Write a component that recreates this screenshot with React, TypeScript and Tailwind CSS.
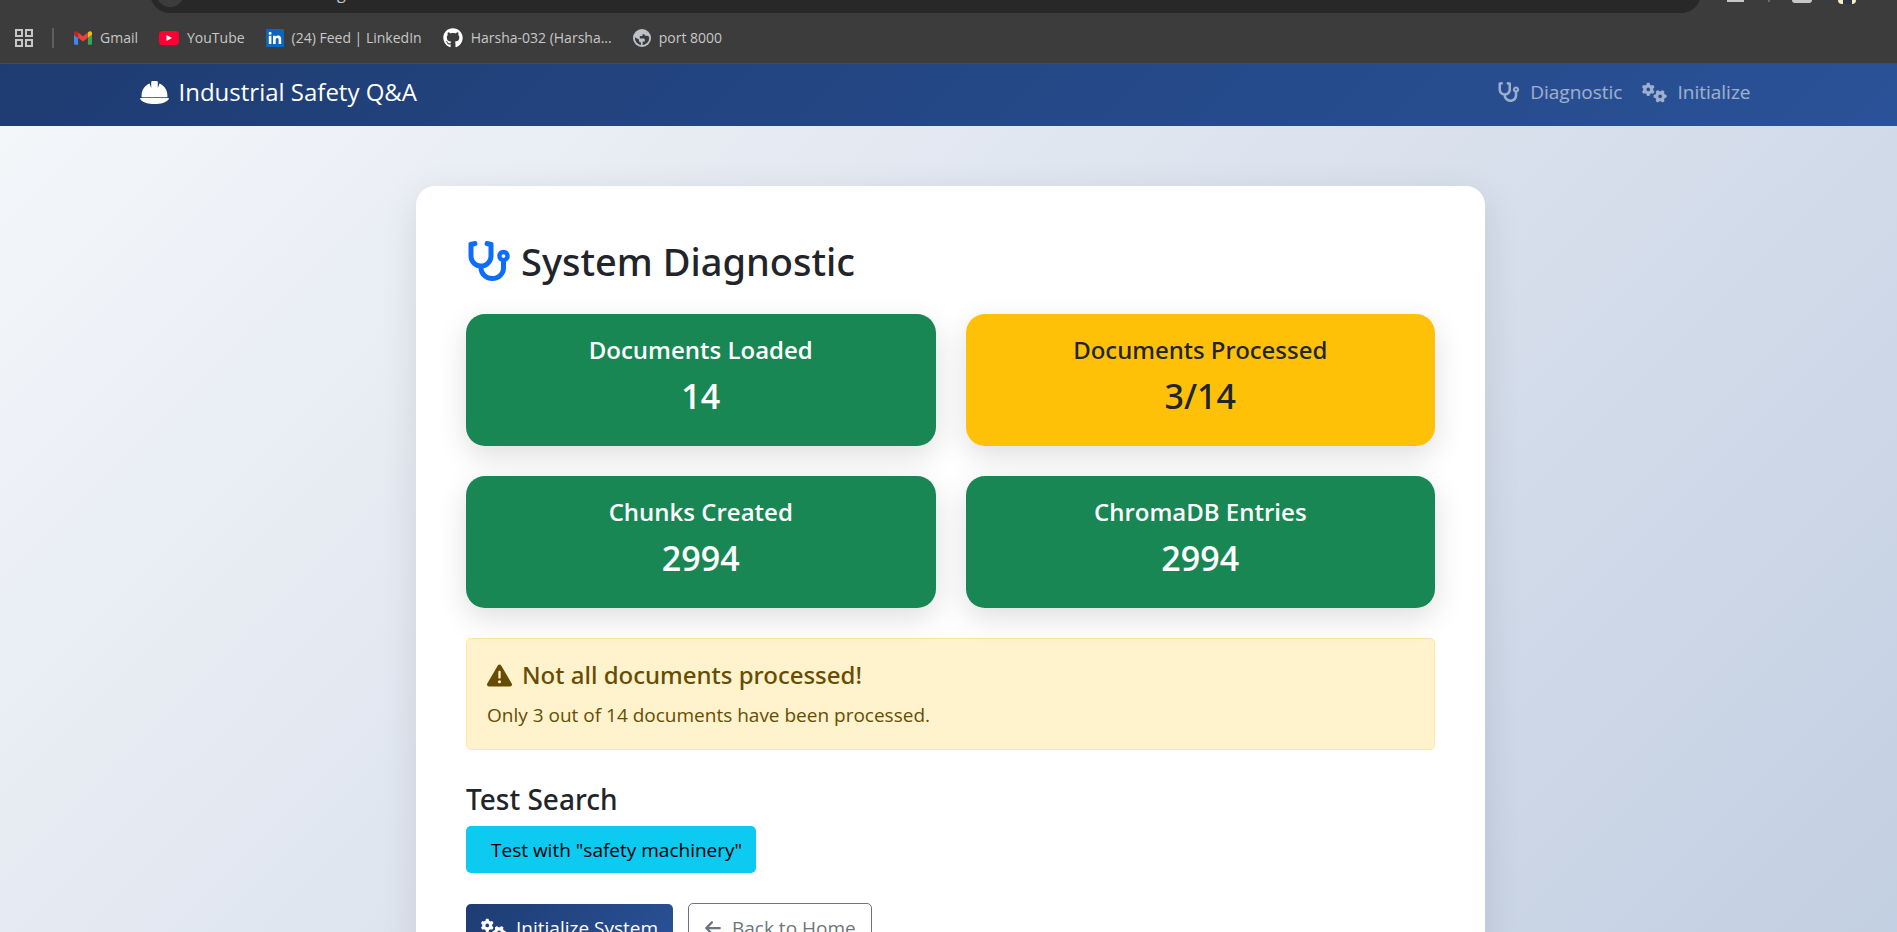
import type { ReactNode } from "react";
import { FaGithub } from "react-icons/fa";
import { FaArrowLeft, FaGears, FaTriangleExclamation } from "react-icons/fa6";

function GmailIcon() {
  return (
    <svg viewBox="52 42 88 66" className="h-[14px] w-[18px]" aria-hidden="true">
      <path fill="#4285f4" d="M58 108h14V74L52 59v43c0 3.32 2.69 6 6 6" />
      <path fill="#34a853" d="M120 108h14c3.32 0 6-2.69 6-6V59l-20 15" />
      <path fill="#fbbc04" d="M120 48v26l20-15v-8c0-7.42-8.47-11.65-14.4-7.2" />
      <path fill="#ea4335" d="M72 74V48l24 18 24-18v26L96 92" />
      <path fill="#c5221f" d="M52 51v8l20 15V48l-5.6-4.2c-5.94-4.45-14.4-.22-14.4 7.2" />
    </svg>
  );
}

function YouTubeIcon() {
  return (
    <svg viewBox="0 0 20 14" className="h-[14px] w-[20px]" aria-hidden="true">
      <rect width="20" height="14" rx="3.5" fill="#ff0033" />
      <path d="M7.5 4l5.5 3-5.5 3z" fill="#fff" />
    </svg>
  );
}

function LinkedInIcon() {
  return (
    <svg viewBox="0 0 18 18" className="size-[18px]" aria-hidden="true">
      <rect width="18" height="18" rx="1" fill="#0a66c2" />
      <path
        fill="#fff"
        d="M2.8 6.8h2.6V15H2.8zM4.1 2.8a1.5 1.5 0 1 1 0 3 1.5 1.5 0 0 1 0-3zM7 6.8h2.5v1.1c.4-.7 1.3-1.3 2.6-1.3 2.6 0 3.1 1.7 3.1 4V15h-2.6v-3.9c0-1 0-2.2-1.3-2.2s-1.6 1-1.6 2.1v4H7z"
      />
    </svg>
  );
}

function GlobeIcon() {
  return (
    <svg viewBox="0 0 18 18" className="size-[18px]" aria-hidden="true">
      <circle cx="9" cy="9" r="9" fill="#bfc3c9" />
      <path
        fill="#3c3c3c"
        d="M11.200 2.200A7.200 7.200 0 0 1 16.200 8.300c-.6-1.200-1.700-1.500-2.900-1.500-1.300 0-1.800-.5-1.800-1.500H9.500v1.600H6.800v2.600h3.500c.9 0 1.500.5 1.500 1.400v1.600H9.600v3.700A7.200 7.200 0 0 1 8 16.100v-2.700c-1.300 0-2-.7-2-1.900v-.9L1.900 8.200A7.200 7.200 0 0 0 9 16.200a7.200 7.200 0 0 0 7.200-7.200 7.200 7.200 0 0 0-5-6.800z"
      />
    </svg>
  );
}

function Stethoscope({ className }: { className: string }) {
  return (
    <svg viewBox="0 0 576 512" className={className} fill="currentColor" aria-hidden="true">
      <path d="M480 112c-44.180 0-80 35.820-80 80c0 32.840 19.810 60.980 48.110 73.310v78.700c0 57.250-50.250 104-112 104c-60 0-109.300-44.100-111.900-99.230C296.600 333.800 352 269.300 352 191.100L352 36.590c0-11.380-8.154-21.380-19.280-23.500L269.800.4775c-13-2.625-25.540 5.766-28.160 18.770L238.400 34.990c-2.625 13 5.812 25.590 18.810 28.220l30.690 6.059L287.900 190.700c0 52.880-42.130 96.630-95.130 97.130c-53.380.5-96.810-42.560-96.810-95.930L95.950 69.370l30.720-6.112c13-2.520 21.410-15.150 18.780-28.150L142.300 19.370c-2.600-13-15.150-21.450-28.150-18.820L51.280 12.990C40.150 15.240 32 25.090 32 36.590v155.400c0 77.250 55.110 142 128.100 156.800C162.700 439.300 240.600 512 336 512c97 0 176-75.370 176-168V265.300c28.230-12.360 48-40.460 48-73.250C560 147.800 524.200 112 480 112zM480 216c-13.250 0-24-10.750-24-24S466.700 168 480 168S504 178.700 504 192S493.300 216 480 216z" />
    </svg>
  );
}

function Bookmark({ icon, children }: { icon: ReactNode; children: ReactNode }) {
  return (
    <a href="#" className="flex items-center gap-2 whitespace-nowrap">
      {icon}
      <span>{children}</span>
    </a>
  );
}

function BrowserBar() {
  return (
    <header className="h-16 shrink-0 overflow-hidden border-b border-[#4b4a48] bg-[#3c3c3c] font-['Open_Sans','Noto_Sans',sans-serif] text-[#c7c7c7]">
      <div className="flex h-[13px] items-end pl-[150px]">
        <div className="flex h-10 w-full max-w-[1551px] items-center overflow-hidden rounded-full bg-[#282828] pl-[6px]">
          <span className="size-7 shrink-0 rounded-full bg-[#3c3c3c]" />
          <input
            type="text"
            aria-label="Address"
            defaultValue="127.0.0.1:8000/diagnostic/"
            className="ml-4 h-6 w-full bg-transparent text-base leading-6 outline-none"
          />
        </div>
        <div className="ml-[26px] flex h-[13px] w-[170px] shrink-0 items-start">
          <span className="h-[2px] w-[17px] bg-[#c7c7c7]" />
          <span className="ml-6 h-[2px] w-[2px] bg-[#6b6b6b]" />
          <span className="ml-[22px] h-[3px] w-5 rounded-b bg-[#c7c7c7]" />
          <span className="ml-[26px] flex h-[4px] w-[18px] justify-center rounded-b-full bg-[#f8f0c0]">
            <span className="h-full w-[9px] bg-[#30364a]" />
          </span>
        </div>
      </div>
      <nav aria-label="Bookmarks" className="flex h-[50px] items-center pl-[15px] text-sm">
        <button type="button" aria-label="Apps">
          <svg viewBox="0 0 18 18" className="size-[18px]" fill="none" stroke="#c7c7c7" strokeWidth="2" aria-hidden="true">
            <path d="M1 1h6v6H1zM11 1h6v6h-6zM1 11h6v6H1zM11 11h6v6h-6z" />
          </svg>
        </button>
        <span className="ml-[19px] h-5 w-[2px] bg-[#5f5f5f]" />
        <div className="ml-5 flex items-center gap-[21px]">
          <Bookmark icon={<GmailIcon />}>Gmail</Bookmark>
          <Bookmark icon={<YouTubeIcon />}>YouTube</Bookmark>
          <Bookmark icon={<LinkedInIcon />}>(24) Feed | LinkedIn</Bookmark>
          <Bookmark icon={<FaGithub className="size-5 text-white" />}>Harsha-032 (Harsha...</Bookmark>
          <Bookmark icon={<GlobeIcon />}>port 8000</Bookmark>
        </div>
      </nav>
    </header>
  );
}

function HardHat() {
  return (
    <svg viewBox="0 0 29 23" className="h-[23px] w-[29px]" fill="#fff" aria-hidden="true">
      <path d="M11.200 1.200Q11.200 0 12.400 0h4.200Q17.800 0 17.800 1.200V7.200l1.600-4.700C24.300 4.500 27.400 9 27.400 14.500v1.700H1.600v-1.700C1.600 9 4.700 4.500 9.600 2.500l1.600 4.700z" />
      <path d="M.7 17h27.600c.7 0 .9.700.4 1.200C26 21.500 20.500 23 14.500 23S3 21.500.3 18.200c-.5-.5-.3-1.200.4-1.200z" />
    </svg>
  );
}

const success = "bg-[#198754] font-semibold text-white";
const warning = "bg-[#ffc107] font-['Noto_Sans',sans-serif] font-medium text-[#212529]";

const stats = [
  { label: "Documents Loaded", value: "14", tone: success },
  { label: "Documents Processed", value: "3/14", tone: warning },
  { label: "Chunks Created", value: "2994", tone: success },
  { label: "ChromaDB Entries", value: "2994", tone: success },
];

export default function App() {
  return (
    <div className="flex h-screen flex-col overflow-hidden">
      <BrowserBar />
      <div className="min-h-0 flex-1 overflow-hidden bg-linear-135 from-[#f5f7fa] to-[#c3cfe2] font-['Open_Sans','Noto_Sans',sans-serif] text-[19px] text-[#212529]">
        <nav className="bg-linear-135 from-[#1e3c72] to-[#2a5298] pl-[2px]">
          <div className="mx-auto flex h-[62px] max-w-[1650px] items-center justify-between pr-6 pb-[6px] pl-[15px]">
            <a href="#" className="flex items-center gap-[10px] text-2xl text-white">
              <HardHat />
              Industrial Safety Q&amp;A
            </a>
            <div className="flex gap-5 text-white/55">
              <a href="#" className="flex items-center gap-[10px]">
                <Stethoscope className="h-5 w-[23px]" />
                Diagnostic
              </a>
              <a href="#" className="flex items-center gap-[10px]">
                <FaGears className="size-[25px]" />
                Initialize
              </a>
            </div>
          </div>
        </nav>
        <main className="pt-[60px] pl-1">
          <section className="mx-auto max-w-[1069px] rounded-[19px] bg-white p-[50px] shadow-[0_10px_38px_rgba(0,0,0,0.1)]">
            <h2 className="flex h-[50px] items-center gap-[10px] font-['Noto_Sans',sans-serif] text-[38px] font-medium">
              <Stethoscope className="h-10 w-[45px] text-[#0d6efd]" />
              System Diagnostic
            </h2>
            <div className="mt-7 grid grid-cols-2 gap-[30px]">
              {stats.map((s) => (
                <div
                  key={s.label}
                  className={`h-[132px] rounded-[19px] pt-[21px] text-center shadow-[0_10px_30px_rgba(0,0,0,0.13)] ${s.tone}`}
                >
                  <h5 className="text-2xl leading-[30px]">{s.label}</h5>
                  <h3 className="mt-[10px] text-[34px] leading-[42px]">{s.value}</h3>
                </div>
              ))}
            </div>
            <div role="alert" className="mt-[30px] rounded-[5px] border border-[#ffe69c] bg-[#fff3cd] px-5 pt-[21px] pb-[19px] text-[#664d03]">
              <h5 className="flex items-center gap-[10px] font-['Noto_Sans',sans-serif] text-2xl leading-[30px] font-medium">
                <FaTriangleExclamation className="size-[25px]" />
                Not all documents processed!
              </h5>
              <p className="mt-[10px] leading-[30px]">Only 3 out of 14 documents have been processed.</p>
            </div>
            <h4 className="mt-[30px] font-['Noto_Sans',sans-serif] text-[28px] leading-[38px] font-medium">Test Search</h4>
            <button type="button" className="mt-2 h-[47px] rounded-[5px] bg-[#0dcaf0] pt-[2px] pr-[14px] pl-[25px] text-black">
              Test with "safety machinery"
            </button>
            <div className="mt-[30px] flex items-center gap-[15px]">
              <button
                type="button"
                className="flex h-[48px] items-center gap-[10px] rounded-[5px] bg-linear-135 from-[#1e3c72] to-[#2a5298] px-[15px] text-white"
              >
                <FaGears className="size-[25px]" />
                Initialize System
              </button>
              <a href="#" className="flex h-[50px] items-center gap-[10px] rounded-[5px] border border-[#6c757d] px-[15px] text-[#6c757d]">
                <FaArrowLeft className="size-[18px]" />
                Back to Home
              </a>
            </div>
          </section>
        </main>
      </div>
    </div>
  );
}
